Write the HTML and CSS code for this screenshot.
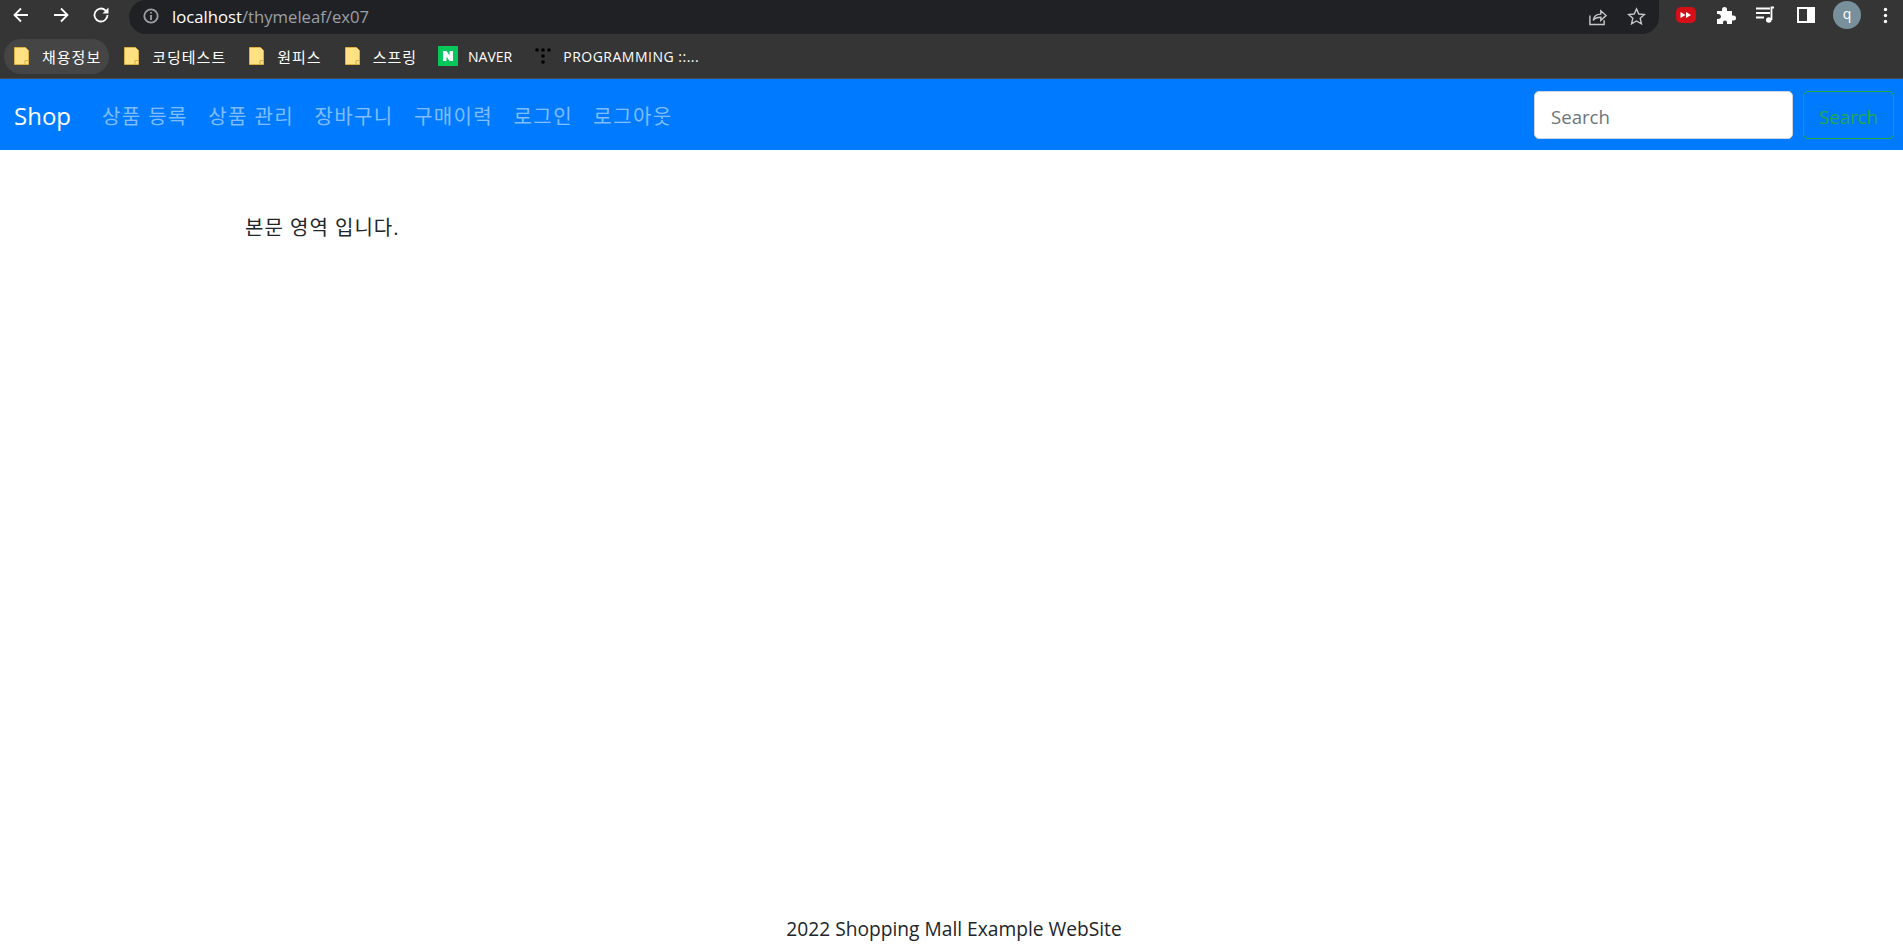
FILE: index.html
```html
<!DOCTYPE html>
<html>
  <head>
    <meta charset="utf-8" />
    <title>Shop</title>
    <link rel="stylesheet" href="styles.css">
  </head>

  <body>
    <div class="toolbar">
      <div class="toolbar-nav">
        <svg class="tool" viewBox="0 0 20 20"><path d="M17 10H4M10 3.500L3.500 10l6.500 6.500" /></svg>
        <svg class="tool" viewBox="0 0 20 20"><path d="M3 10h13M10 3.500l6.500 6.500-6.500 6.500" /></svg>
        <svg class="tool" viewBox="0 0 20 20"><path d="M16.500 10a6.500 6.500 0 1 1-2-4.700L16.500 7.300" /><path class="solid" d="M17.500 2.500v6h-6z" /></svg>
      </div>
      <div class="address">
        <svg class="info" viewBox="0 0 16 16"><circle cx="8" cy="8" r="6.700" /><path d="M8 7v5M8 4v1.600" /></svg>
        <span class="host">localhost</span><span class="path">/thymeleaf/ex07</span>
        <div class="address-end">
          <svg class="dim" viewBox="0 0 20 20"><path d="M2 9v9.500h15V14M5.500 14c.5-4 3.500-6.500 8-6.500V4l5.500 5-5.500 5v-3.300c-3.500 0-6.500 1-8 3.300z" /></svg>
          <svg class="dim" viewBox="0 0 20 20"><path d="M10 2l2.400 5.400 5.900.6-4.400 3.900 1.300 5.800L10 14.700l-5.200 3 1.300-5.800L1.700 8l5.900-.6z" /></svg>
        </div>
      </div>
      <div class="extensions">
        <svg class="ext" viewBox="0 0 20 20"><rect x="0" y="2" width="20" height="16" rx="5" fill="#d40f18" /><path d="M4.500 7l5 3-5 3zM10 7l5 3-5 3z" fill="#fff" /></svg>
        <svg class="ext" viewBox="0 0 20 20"><path fill="#fff" d="M1 6h5V4.500a2.500 2.500 0 0 1 5 0V6h5v4.500h1.500a2.500 2.500 0 0 1 0 5H16V19H11v-1.500a2 2 0 0 0-4 0V19H1v-5h1.500a2.500 2.500 0 0 0 0-5H1z" /></svg>
        <svg class="ext" viewBox="0 0 20 20"><path class="white-line" d="M0 3.500h14M0 8h14M0 12.500h8" /><path class="white-line" d="M18 2.500h-2.500V15" /><circle cx="12.800" cy="15" r="2.800" fill="#fff" /></svg>
        <svg class="ext" viewBox="0 0 20 20"><path fill="#fff" d="M1 2h18v16H1zM3 4v12h8V4z" /></svg>
        <div class="avatar">q</div>
        <svg class="dots" viewBox="0 0 4 20"><circle cx="2" cy="3" r="2" /><circle cx="2" cy="10" r="2" /><circle cx="2" cy="17" r="2" /></svg>
      </div>
    </div>

    <div class="bookmarks">
      <a class="bookmark ko active"><svg class="folder" viewBox="0 0 15 18"><path d="M.5.500h11l3 3v14H.5z" /><path class="fold" d="M11 17.500v-4h3.500" /></svg>채용정보</a>
      <a class="bookmark ko"><svg class="folder" viewBox="0 0 15 18"><path d="M.5.500h11l3 3v14H.5z" /><path class="fold" d="M11 17.500v-4h3.500" /></svg>코딩테스트</a>
      <a class="bookmark ko"><svg class="folder" viewBox="0 0 15 18"><path d="M.5.500h11l3 3v14H.5z" /><path class="fold" d="M11 17.500v-4h3.500" /></svg>원피스</a>
      <a class="bookmark ko"><svg class="folder" viewBox="0 0 15 18"><path d="M.5.500h11l3 3v14H.5z" /><path class="fold" d="M11 17.500v-4h3.500" /></svg>스프링</a>
      <a class="bookmark site"><svg class="favicon" viewBox="0 0 20 20"><rect width="20" height="20" fill="#03c75a" /><path d="M5 5h3.500l3 4.500V5H15v10h-3.500l-3-4.500V15H5z" fill="#fff" /></svg>NAVER</a>
      <a class="bookmark site wide"><svg class="favicon narrow" viewBox="0 0 16 20"><g fill="#000"><circle cx="2" cy="4" r="1.800" /><circle cx="8" cy="4" r="1.800" /><circle cx="14" cy="4" r="1.800" /><circle cx="8" cy="10" r="1.800" /><circle cx="8" cy="16" r="1.800" /></g></svg>PROGRAMMING ::...</a>
    </div>

    <nav class="navbar">
      <a class="brand">Shop</a>
      <ul class="nav-links">
        <li><a>상품 등록</a></li>
        <li><a>상품 관리</a></li>
        <li><a>장바구니</a></li>
        <li><a>구매이력</a></li>
        <li><a>로그인</a></li>
        <li><a>로그아웃</a></li>
      </ul>
      <form class="search">
        <input type="text" placeholder="Search" />
        <button type="button">Search</button>
      </form>
    </nav>

    <main class="content">본문 영역 입니다.</main>

    <footer class="footer">2022 Shopping Mall Example WebSite</footer>
  </body>
</html>
```

FILE: styles.css
```css
html,
body {
  height: 100%;
}

body {
  margin: 0;
  display: flex;
  flex-direction: column;
  overflow: hidden;
  background: white;
  color: #212529;
  font-family: "Open Sans", "Noto Sans CJK KR", sans-serif;
}

/* browser frame */
.toolbar {
  display: flex;
  height: 34px;
  background: #353535;
}

.toolbar-nav {
  display: flex;
  align-items: center;
  gap: 20px;
  width: 129px;
  padding: 0 0 4px 11px;
  box-sizing: border-box;
}

.tool {
  width: 20px;
  height: 20px;
  fill: none;
  stroke: white;
  stroke-width: 1.8;
}

.tool .solid {
  fill: white;
  stroke: none;
}

.address {
  display: flex;
  align-items: center;
  width: 1530px;
  padding: 0 0 2px 14px;
  box-sizing: border-box;
  background: #202124;
  border-radius: 17px 0 17px 17px;
  font-size: 16.7px;
}

.info {
  width: 16px;
  height: 16px;
  margin-right: 13px;
  fill: none;
  stroke: #9aa0a6;
  stroke-width: 1.8;
}

.host {
  color: white;
}

.path {
  color: #9aa0a6;
}

.address-end {
  display: flex;
  gap: 20px;
  margin-left: auto;
  margin-right: 13px;
}

.dim {
  width: 19px;
  height: 19px;
  fill: none;
  stroke: #c4c7c5;
  stroke-width: 1.5;
}

.extensions {
  display: flex;
  align-items: center;
  flex: 1;
  padding: 0 0 4px 17px;
}

.ext {
  width: 20px;
  height: 20px;
  margin-right: 20px;
}

.white-line {
  fill: none;
  stroke: white;
  stroke-width: 1.8;
}

.avatar {
  width: 28px;
  height: 28px;
  margin-left: -3px;
  border-radius: 50%;
  background: #78909c;
  color: white;
  font-size: 14px;
  line-height: 25px;
  text-align: center;
}

.dots {
  width: 5px;
  height: 17px;
  margin-left: 22px;
  fill: white;
}

.bookmarks {
  display: flex;
  align-items: center;
  gap: 5px;
  height: 45px;
  padding-left: 4px;
  background: #353535;
  border-bottom: 1px solid #4a4a4a;
  box-sizing: border-box;
  font-size: 14px;
}

.bookmark {
  display: flex;
  align-items: center;
  gap: 13px;
  height: 35px;
  padding: 0 8px 0 10px;
  color: white;
  white-space: nowrap;
  border-radius: 17px;
}

.bookmark.ko {
  font-size: 15px;
  letter-spacing: 1px;
}

.bookmark.site {
  padding-left: 8px;
}

.bookmark.wide {
  padding-left: 10px;
  letter-spacing: 0.5px;
}

.bookmark.active {
  background: #454545;
}

.folder {
  width: 15px;
  height: 18px;
  fill: #ffe082;
  stroke: #d9b13f;
}

.fold {
  fill: none;
}

.favicon {
  width: 20px;
  height: 20px;
  margin-right: -3px;
}

.favicon.narrow {
  width: 16px;
  margin-right: -1px;
}

/* page */
.navbar {
  display: flex;
  align-items: center;
  height: 71px;
  padding: 0 9px 0 14px;
  background: #007bff;
  box-sizing: border-box;
}

.brand {
  margin-right: 21px;
  padding-top: 1px;
  color: white;
  font-size: 24px;
}

.nav-links {
  display: flex;
  margin: 0;
  padding: 2px 0 0;
  list-style: none;
  font-size: 20px;
  letter-spacing: 1.4px;
}

.nav-links a {
  display: block;
  padding: 0 10.4px 0 10px;
  color: rgba(255, 255, 255, 0.5);
}

.search {
  display: flex;
  gap: 10px;
  margin-left: auto;
}

.search input {
  width: 259px;
  height: 48px;
  padding: 3px 16px 0;
  box-sizing: border-box;
  border: 1px solid #ced4da;
  border-radius: 5px;
  font: inherit;
  font-size: 18.6px;
  color: #495057;
}

.search input::placeholder {
  color: #6c757d;
}

.search button {
  width: 91px;
  height: 48px;
  padding: 3px 0 0;
  background: transparent;
  border: 1px solid #28a745;
  border-radius: 5px;
  font: inherit;
  font-size: 18.6px;
  color: #28a745;
}

.content {
  flex: 1;
  padding: 63px 0 0 245px;
  font-size: 20px;
  line-height: 30px;
  letter-spacing: 1px;
}

.footer {
  height: 30px;
  padding-left: 5px;
  line-height: 30px;
  text-align: center;
  font-size: 19.2px;
}
```
